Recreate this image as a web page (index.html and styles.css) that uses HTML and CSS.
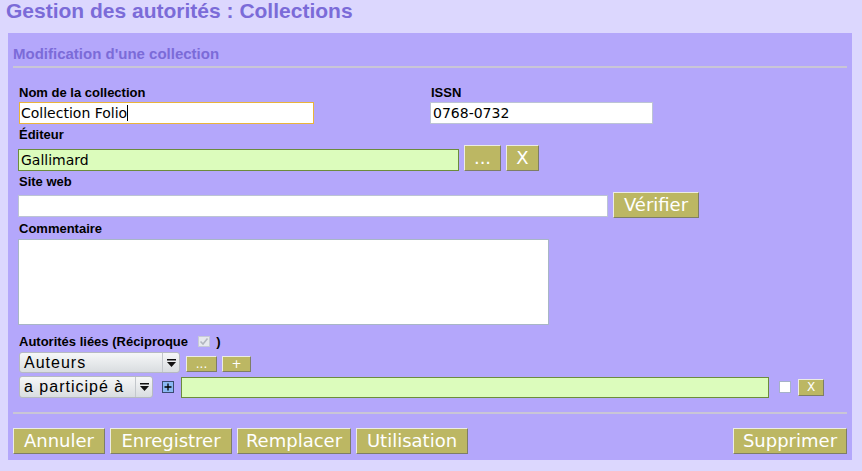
FILE: index.html
```html
<!DOCTYPE html>
<html lang="fr">
<head>
<meta charset="utf-8">
<title>Gestion des autorités : Collections</title>
<link rel="stylesheet" href="styles.css">
</head>
<body>
<h1 class="page-title">Gestion des autorités : Collections</h1>
<div class="panel">
  <h3 class="panel-title">Modification d'une collection</h3>
  <div class="rule"></div>
  <form class="form">
    <div class="two-col">
      <div class="col-left">
        <label class="lbl">Nom de la collection</label>
        <div class="field field-focus field-nom">Collection Folio<span class="caret"></span></div>
      </div>
      <div class="col-right">
        <label class="lbl">ISSN</label>
        <input class="field field-issn" type="text" value="0768-0732">
      </div>
    </div>

    <label class="lbl lbl-gap">Éditeur</label>
    <div class="row row-end row-gap">
      <input class="field field-green field-editeur" type="text" value="Gallimard">
      <button type="button" class="btn w37">...</button>
      <button type="button" class="btn w33">X</button>
    </div>

    <label class="lbl lbl-gap">Site web</label>
    <div class="row row-end row-gap">
      <input class="field field-web" type="text" value="">
      <button type="button" class="btn w86">Vérifier</button>
    </div>

    <label class="lbl lbl-gap">Commentaire</label>
    <textarea class="comment"></textarea>

    <div class="lbl lbl-aut">Autorités liées (Réciproque <span class="recip-box"><svg width="12" height="11" viewBox="0 0 12 11"><rect x="0.5" y="0.5" width="11" height="10" fill="#e6e8ee" stroke="#c6cad6"/><path d="M2.5 5.5 L5 8 L9.5 2.5" fill="none" stroke="#b2b6c0" stroke-width="1.6"/></svg></span> )</div>

    <div class="row row-sel1">
      <div class="select select-aut"><span class="select-text">Auteurs</span><span class="select-arrow"><svg width="9" height="8" viewBox="0 0 9 8"><rect x="0" y="0" width="9" height="1.5" fill="#111"/><path d="M0 3 L9 3 L4.5 8 Z" fill="#111"/></svg></span></div>
      <button type="button" class="btn btn-small w31">...</button>
      <button type="button" class="btn btn-small w29">+</button>
    </div>

    <div class="row row-sel2">
      <div class="select select-rel"><span class="select-text">a participé à</span><span class="select-arrow"><svg width="9" height="8" viewBox="0 0 9 8"><rect x="0" y="0" width="9" height="1.5" fill="#111"/><path d="M0 3 L9 3 L4.5 8 Z" fill="#111"/></svg></span></div>
      <span class="plus-icon"><svg width="12" height="12" viewBox="0 0 12 12"><rect x="0.5" y="0.5" width="11" height="11" fill="#8ab8f4" stroke="#3a4a70"/><path d="M6 2.5 V9.5 M2.5 6 H9.5" stroke="#000" stroke-width="1.3"/></svg></span>
      <input class="field field-green field-aut" type="text" value="">
      <input class="chk" type="checkbox">
      <button type="button" class="btn btn-small btn-x">X</button>
    </div>
  </form>
  <div class="rule rule-bottom"></div>
  <div class="actions">
    <div class="actions-left">
      <button type="button" class="btn w92">Annuler</button>
      <button type="button" class="btn w122">Enregistrer</button>
      <button type="button" class="btn w114">Remplacer</button>
      <button type="button" class="btn w112">Utilisation</button>
    </div>
    <button type="button" class="btn w114">Supprimer</button>
  </div>
</div>
</body>
</html>
```

FILE: styles.css
```css
html, body {
  margin: 0;
  padding: 0;
  background: #dcd7fe;
}

body {
  font-family: "Liberation Sans", Arial, sans-serif;
  color: #000;
}

.page-title {
  margin: 0 0 11px 0;
  padding-left: 6px;
  font: bold 21px/22px "Liberation Sans", Arial, sans-serif;
  color: #7b6bd8;
}

.panel {
  margin-left: 8px;
  width: 844px;
  box-sizing: border-box;
  background: #b4a7fb;
  padding: 12px 5px 6px 5px;
}

.panel-title {
  margin: 0;
  font: bold 15px/17px "Liberation Sans", Arial, sans-serif;
  color: #7b6bd8;
}

.rule {
  height: 2px;
  background: #c9c6d6;
  margin-top: 4px;
}

.rule-bottom {
  margin-top: 14px;
}

.form {
  margin: 17px 0 0 0;
  padding-left: 5px;
}

.lbl {
  display: block;
  font: bold 13px/15px "Liberation Sans", Arial, sans-serif;
  color: #000;
  padding-left: 1px;
}

.lbl-gap {
  margin-top: 3px;
}

.two-col {
  display: flex;
}

.col-left {
  width: 412px;
}

.field {
  display: block;
  box-sizing: border-box;
  height: 22px;
  margin: 2px 0 0 0;
  padding: 0 2px;
  border: 1px solid #bcc4d4;
  background: #fff;
  font: 14px/20px "DejaVu Sans", sans-serif;
  color: #000;
  outline: none;
}

.field-focus {
  border-color: #eab43a;
}

.field-nom {
  width: 295px;
  margin-left: 1px;
  padding-left: 1px;
}

.caret {
  display: inline-block;
  width: 1px;
  height: 16px;
  background: #000;
  vertical-align: -3px;
}

.field-issn {
  width: 223px;
}

.field-green {
  background: #dcfcbc;
  border-color: #6c8c3c;
}

.field-editeur {
  width: 441px;
  margin: 0;
}

.field-web {
  width: 590px;
  margin: 0 0 1px 0;
}

.row {
  display: flex;
}

.row-end {
  align-items: flex-end;
  gap: 5px;
}

.row-gap {
  margin-top: 3px;
}

.btn {
  box-sizing: border-box;
  height: 26px;
  margin: 0;
  padding: 0 4px;
  background: #bcb763;
  color: #fff;
  border: 1px solid;
  border-color: #ecece4 #7e7e66 #7e7e66 #ecece4;
  font: 18px/22px "DejaVu Sans", sans-serif;
  text-align: center;
  white-space: nowrap;
  cursor: pointer;
}

.w29 { width: 29px; }
.w31 { width: 31px; }
.w33 { width: 33px; }
.w37 { width: 37px; }
.w86 { width: 86px; }
.w92 { width: 92px; }
.w112 { width: 112px; }
.w114 { width: 114px; }
.w122 { width: 122px; }

.btn-small {
  height: 16px;
  padding: 0;
  font: 12px/12px "DejaVu Sans", sans-serif;
}

.comment {
  display: block;
  box-sizing: border-box;
  width: 531px;
  height: 86px;
  margin: 3px 0 0 0;
  border: 1px solid #a8b6c6;
  background: #fff;
  resize: none;
  outline: none;
}

.lbl-aut {
  margin-top: 9px;
  display: flex;
  align-items: center;
  white-space: pre;
}

.recip-box {
  display: inline-flex;
  margin-left: 6px;
  margin-right: 3px;
}

.row-sel1 {
  margin-top: 3px;
  align-items: flex-end;
}

.row-sel1 .btn-small {
  margin-left: 5px;
  margin-bottom: 1px;
}

.row-sel1 .select + .btn-small {
  margin-left: 6px;
}

.select {
  box-sizing: border-box;
  display: flex;
  align-items: stretch;
  margin-left: 1px;
  border: 1px solid #b6bac2;
  border-radius: 3px;
  background: linear-gradient(#f6f7f8, #d9dde0);
  font: 16px/19px "Liberation Sans", Arial, sans-serif;
  letter-spacing: 1px;
  color: #000;
}

.select-aut {
  width: 161px;
  height: 21px;
}

.select-rel {
  width: 134px;
  height: 22px;
}

.select-text {
  flex: 1;
  padding-left: 4px;
  white-space: nowrap;
  overflow: hidden;
}

.select-arrow {
  width: 16px;
  border-left: 1px solid #c3c7cc;
  display: flex;
  align-items: center;
  justify-content: center;
}

.row-sel2 {
  margin-top: 3px;
  align-items: center;
}

.plus-icon {
  display: flex;
  margin-left: 9px;
}

.field-aut {
  width: 588px;
  height: 21px;
  margin: 0 0 0 7px;
}

.chk {
  appearance: none;
  -webkit-appearance: none;
  box-sizing: border-box;
  width: 12px;
  height: 12px;
  margin: 0 0 0 10px;
  border: 1px solid #a6b2c8;
  background: #fff;
}

.btn-x {
  margin-left: 7px;
  width: 26px;
  height: 17px;
  padding: 0;
  font-size: 12px;
}

.actions {
  margin-top: 14px;
  display: flex;
  justify-content: space-between;
}

.actions-left {
  display: flex;
  gap: 5px;
}
```
